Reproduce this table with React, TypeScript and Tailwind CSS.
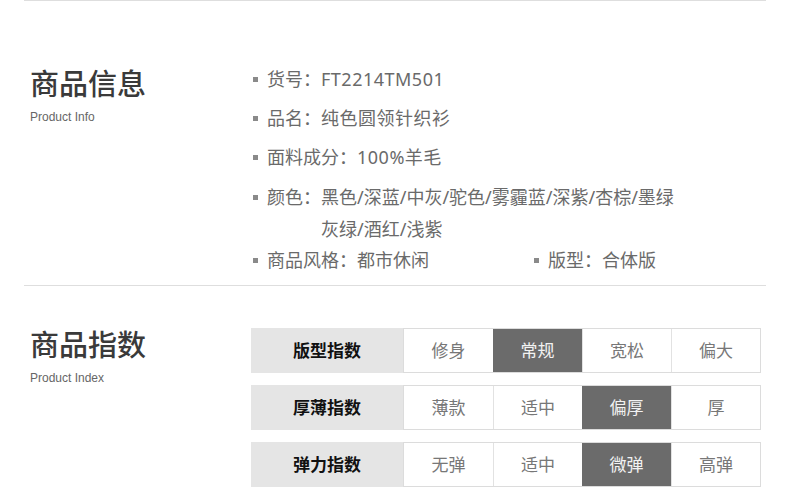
const infoItems = [
  { label: "货号：", value: "FT2214TM501" },
  { label: "品名：", value: "纯色圆领针织衫" },
  { label: "面料成分：", value: "100%羊毛" },
];

const indexRows = [
  { name: "版型指数", options: ["修身", "常规", "宽松", "偏大"], active: 1 },
  { name: "厚薄指数", options: ["薄款", "适中", "偏厚", "厚"], active: 2 },
  { name: "弹力指数", options: ["无弹", "适中", "微弹", "高弹"], active: 2 },
];

function Bullet() {
  return <span className="inline-block w-[5px] h-[5px] bg-[#8a8a8a] mr-[9px] shrink-0"></span>;
}

function SectionTitle({ title, sub }: { title: string; sub: string }) {
  return (
    <div className="w-[251px] shrink-0 pl-[30px]">
      <h2 className="text-[29px] leading-[35px] font-medium text-[#3a3a3a]">{title}</h2>
      <p className="mt-[9px] text-[12px] leading-[14px] text-[#666] font-['Liberation_Sans',sans-serif]">{sub}</p>
    </div>
  );
}

export default function App() {
  return (
    <div className="w-[790px] h-[498px] bg-white overflow-hidden font-['Noto_Sans','Noto_Sans_CJK_SC',sans-serif]">
      <div className="mx-[24px] border-t border-[#dedede]"></div>

      {/* Product info */}
      <section className="flex pt-[59px]">
        <div className="pt-[6px]">
          <SectionTitle title="商品信息" sub="Product Info" />
        </div>

        <div className="flex flex-col text-[18px] text-[#6a6a6a]">
          {infoItems.map((item) => (
            <div key={item.label} className="flex items-center h-[39px] pl-[2px]">
              <Bullet />
              <span>{item.label}</span>
              <span className="tracking-[0.5px]">{item.value}</span>
            </div>
          ))}

          <div className="flex pt-[4px] pl-[2px] leading-[32px]">
            <span className="flex items-center h-[32px]">
              <Bullet />
              <span>颜色：</span>
            </span>
            <span className="w-[360px]">黑色/深蓝/中灰/驼色/雾霾蓝/深紫/杏棕/墨绿 灰绿/酒红/浅紫</span>
          </div>

          <div className="flex items-center h-[30px] pl-[2px]">
            <div className="flex items-center w-[281px]">
              <Bullet />
              <span>商品风格：</span>
              <span>都市休闲</span>
            </div>
            <div className="flex items-center">
              <Bullet />
              <span>版型：</span>
              <span>合体版</span>
            </div>
          </div>
        </div>
      </section>

      <div className="mx-[24px] mt-[10px] border-t border-[#dedede]"></div>

      {/* Product index */}
      <section className="flex pt-[42px]">
        <div className="-mt-[1px]">
          <SectionTitle title="商品指数" sub="Product Index" />
        </div>

        <div className="flex flex-col gap-[12px]">
          {indexRows.map((row) => (
            <div key={row.name} className="flex h-[45px] text-[17px]">
              <div className="w-[152px] bg-[#e5e5e5] flex items-center justify-center font-bold text-[#111]">
                {row.name}
              </div>
              <div className="flex border border-[#dcdcdc]">
                {row.options.map((opt, i) => (
                  <div
                    key={opt + i}
                    className={
                      i === row.active
                        ? "w-[89px] flex items-center justify-center bg-[#6b6b6b] text-[#f2f2f2]"
                        : "w-[89px] flex items-center justify-center bg-white text-[#777] border-l border-[#e2e2e2] first:border-l-0"
                    }
                  >
                    {opt}
                  </div>
                ))}
              </div>
            </div>
          ))}
        </div>
      </section>
    </div>
  );
}
